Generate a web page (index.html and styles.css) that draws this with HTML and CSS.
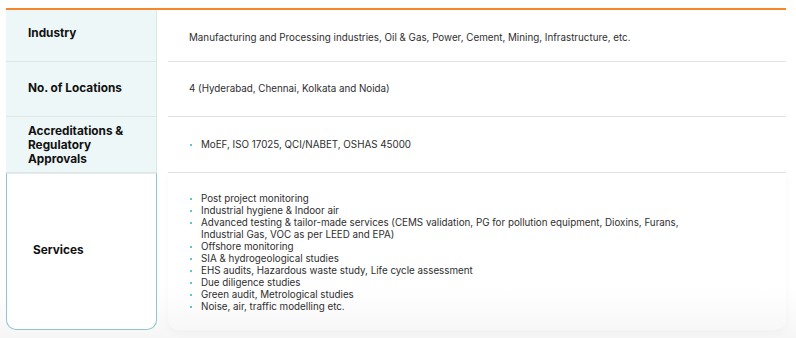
FILE: index.html
```html
<!DOCTYPE html>
<html>
<head>
<meta charset="utf-8">
<link rel="stylesheet" href="styles.css">
</head>
<body>
<div class="page">
  <div class="table">
    <div class="label first"><span>Industry</span></div>
    <div class="value v1"><p>Manufacturing and Processing industries, Oil &amp; Gas, Power, Cement, Mining, Infrastructure, etc.</p></div>

    <div class="label center"><span>No. of Locations</span></div>
    <div class="value v2"><p>4 (Hyderabad, Chennai, Kolkata and Noida)</p></div>

    <div class="label center acc"><span>Accreditations &amp;<br>Regulatory<br>Approvals</span></div>
    <div class="value v3">
      <ul class="bullets"><li>MoEF, ISO 17025, QCI/NABET, OSHAS 45000</li></ul>
    </div>

    <div class="label services"><span>Services</span></div>
    <div class="value v4">
      <ul class="bullets">
        <li>Post project monitoring</li>
        <li>Industrial hygiene &amp; Indoor air</li>
        <li>Advanced testing &amp; tailor-made services (CEMS validation, PG for pollution equipment, Dioxins, Furans, Industrial Gas, VOC as per LEED and EPA)</li>
        <li>Offshore monitoring</li>
        <li>SIA &amp; hydrogeological studies</li>
        <li>EHS audits, Hazardous waste study, Life cycle assessment</li>
        <li>Due diligence studies</li>
        <li>Green audit, Metrological studies</li>
        <li>Noise, air, traffic modelling etc.</li>
      </ul>
    </div>
  </div>
</div>
</body>
</html>
```

FILE: styles.css
```css
* { box-sizing: border-box; }
html, body { margin: 0; padding: 0; background: #ffffff; }
body { font-family: Inter, "Open Sans", "DejaVu Sans", sans-serif; color: #2b2b2b; }

.page {
  width: 796px;
  height: 338px;
  padding: 8px 10px 0 6px;
  background: linear-gradient(180deg, #ffffff 0%, #ffffff 85%, #f6f6f6 100%);
}

.table {
  border-top: 2px solid #f5862a;
  display: grid;
  grid-template-columns: 151px 1fr;
  grid-template-rows: 52px 55px 56px 157px;
  column-gap: 11px;
}

.label {
  background: #eef7f7;
  border-right: 1px solid #dbe8e8;
  border-bottom: 1px solid #dde5e5;
  padding-left: 22px;
  font-weight: 700;
  font-size: 11.8px;
  line-height: 13.8px;
  color: #111;
  display: flex;
  align-items: center;
}
.label.first { align-items: flex-start; padding-top: 17px; }
.label.acc { padding-top: 3px; }
.label.services {
  background: #ffffff;
  border: 1px solid #8fc6c6;
  border-top: 1px solid #e3eded;
  border-radius: 0 0 10px 10px;
  padding-left: 26px;
  padding-bottom: 2px;
}

.value {
  border-bottom: 1px solid #e2e2e2;
  display: flex;
  align-items: center;
  padding-left: 21px;
  font-size: 9.8px;
  line-height: 12.2px;
  color: #2e2e2e;
}
.value p { margin: 0; }
.v1 { padding-top: 5px; }
.v2 { padding-top: 1px; }
.v3 { padding-top: 2px; }
.v4 {
  border-bottom: none;
  border-radius: 0 0 10px 10px;
  box-shadow: 0 3px 8px rgba(0,0,0,0.03);
  align-items: flex-start;
  padding-top: 20px;
  line-height: 12px;
}

.bullets {
  list-style: none;
  margin: 0;
  padding: 0;
  width: 500px;
}
.bullets li {
  position: relative;
  padding-left: 12px;
}
.bullets li::before {
  content: "";
  position: absolute;
  left: 1px;
  top: 5px;
  width: 2px;
  height: 2px;
  border-radius: 50%;
  background: #2bb3b3;
}
```
